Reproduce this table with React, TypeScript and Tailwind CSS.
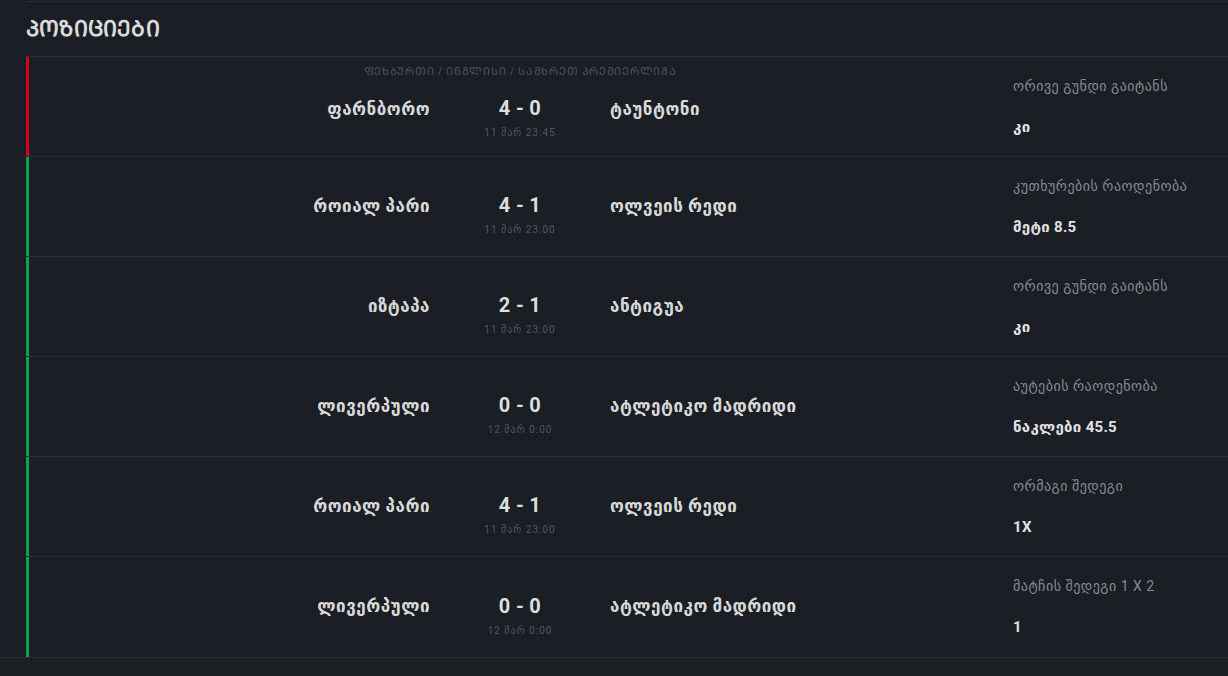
import React from "react";

type Row = {
  home: string;
  away: string;
  score: string;
  date: string;
  label: string;
  value: string;
  color: string;
  league?: string;
};

const rows: Row[] = [
  { home: "ფარნბორო", away: "ტაუნტონი", score: "4 - 0", date: "11 მარ 23:45", label: "ორივე გუნდი გაიტანს", value: "კი", color: "bg-[#d0021b]", league: "ᲤᲔᲮᲑᲣᲠᲗᲘ / ᲘᲜᲒᲚᲘᲡᲘ / ᲡᲐᲛᲮᲠᲔᲗ ᲞᲠᲔᲛᲘᲔᲠᲚᲘᲒᲐ" },
  { home: "როიალ პარი", away: "ოლვეის რედი", score: "4 - 1", date: "11 მარ 23:00", label: "კუთხურების რაოდენობა", value: "მეტი 8.5", color: "bg-[#0aa34a]" },
  { home: "იზტაპა", away: "ანტიგუა", score: "2 - 1", date: "11 მარ 23:00", label: "ორივე გუნდი გაიტანს", value: "კი", color: "bg-[#0aa34a]" },
  { home: "ლივერპული", away: "ატლეტიკო მადრიდი", score: "0 - 0", date: "12 მარ 0:00", label: "აუტების რაოდენობა", value: "ნაკლები 45.5", color: "bg-[#0aa34a]" },
  { home: "როიალ პარი", away: "ოლვეის რედი", score: "4 - 1", date: "11 მარ 23:00", label: "ორმაგი შედეგი", value: "1X", color: "bg-[#0aa34a]" },
  { home: "ლივერპული", away: "ატლეტიკო მადრიდი", score: "0 - 0", date: "12 მარ 0:00", label: "მატჩის შედეგი 1 X 2", value: "1", color: "bg-[#0aa34a]" },
];

const font = { fontFamily: '"Roboto", "DejaVu Sans", sans-serif' };

export default function App() {
  return (
    <div className="w-[1228px] h-[676px] overflow-hidden bg-[#1b1e25] text-[#d6d7d9]" style={font}>
      <div className="ml-[26px] pt-[1px]">
        <div className="border-t border-[#2a2e36] h-[55px] flex items-center">
          <h1 className="text-[22px] font-bold text-[#dadada] tracking-[0.2px] leading-none">ᲞᲝᲖᲘᲪᲘᲔᲑᲘ</h1>
        </div>
        <div className="border-t border-[#2a2e36]">
          {rows.map((r, i) => (
            <div key={i} className="relative flex h-[100px] border-b border-[#2a2e36] last:border-b-0">
              <div className={`w-[3px] ${r.color}`} />
              {r.league && (
                <div className="absolute left-[3px] w-[982px] top-[8px] flex justify-center text-[11px] text-[#4b5360] tracking-[0.7px] leading-[14px]">
                  {r.league}
                </div>
              )}
              <div className={`flex w-[982px] items-center ${r.league ? "pt-[6px]" : ""}`}>
                <div className="w-[401px] text-right text-[17px] font-semibold text-[#d8d8d8] tracking-[0.5px]">{r.home}</div>
                <div className="w-[180px] flex flex-col items-center pt-[16px]">
                  <div className="text-[20px] font-bold text-[#dedede] leading-[26px] tracking-[0.3px]">{r.score}</div>
                  <div className="text-[10px] text-[#4f5866] tracking-[1px] leading-[14px] mt-[5px]">{r.date}</div>
                </div>
                <div className="w-[401px] text-left text-[17px] font-semibold text-[#d8d8d8] tracking-[0.5px]">{r.away}</div>
              </div>
              <div className="flex-1 pl-[2px] pt-[20px]">
                <div className="text-[14px] text-[#858b94] leading-[18px] tracking-[0.5px]">{r.label}</div>
                <div className="text-[15px] font-bold text-[#e2e2e2] leading-[20px] mt-[22px] tracking-[0.3px]">{r.value}</div>
              </div>
            </div>
          ))}
        </div>
      </div>
      <div className="border-t border-[#2a2e36] bg-[#1c1f24] h-[30px]" />
    </div>
  );
}
